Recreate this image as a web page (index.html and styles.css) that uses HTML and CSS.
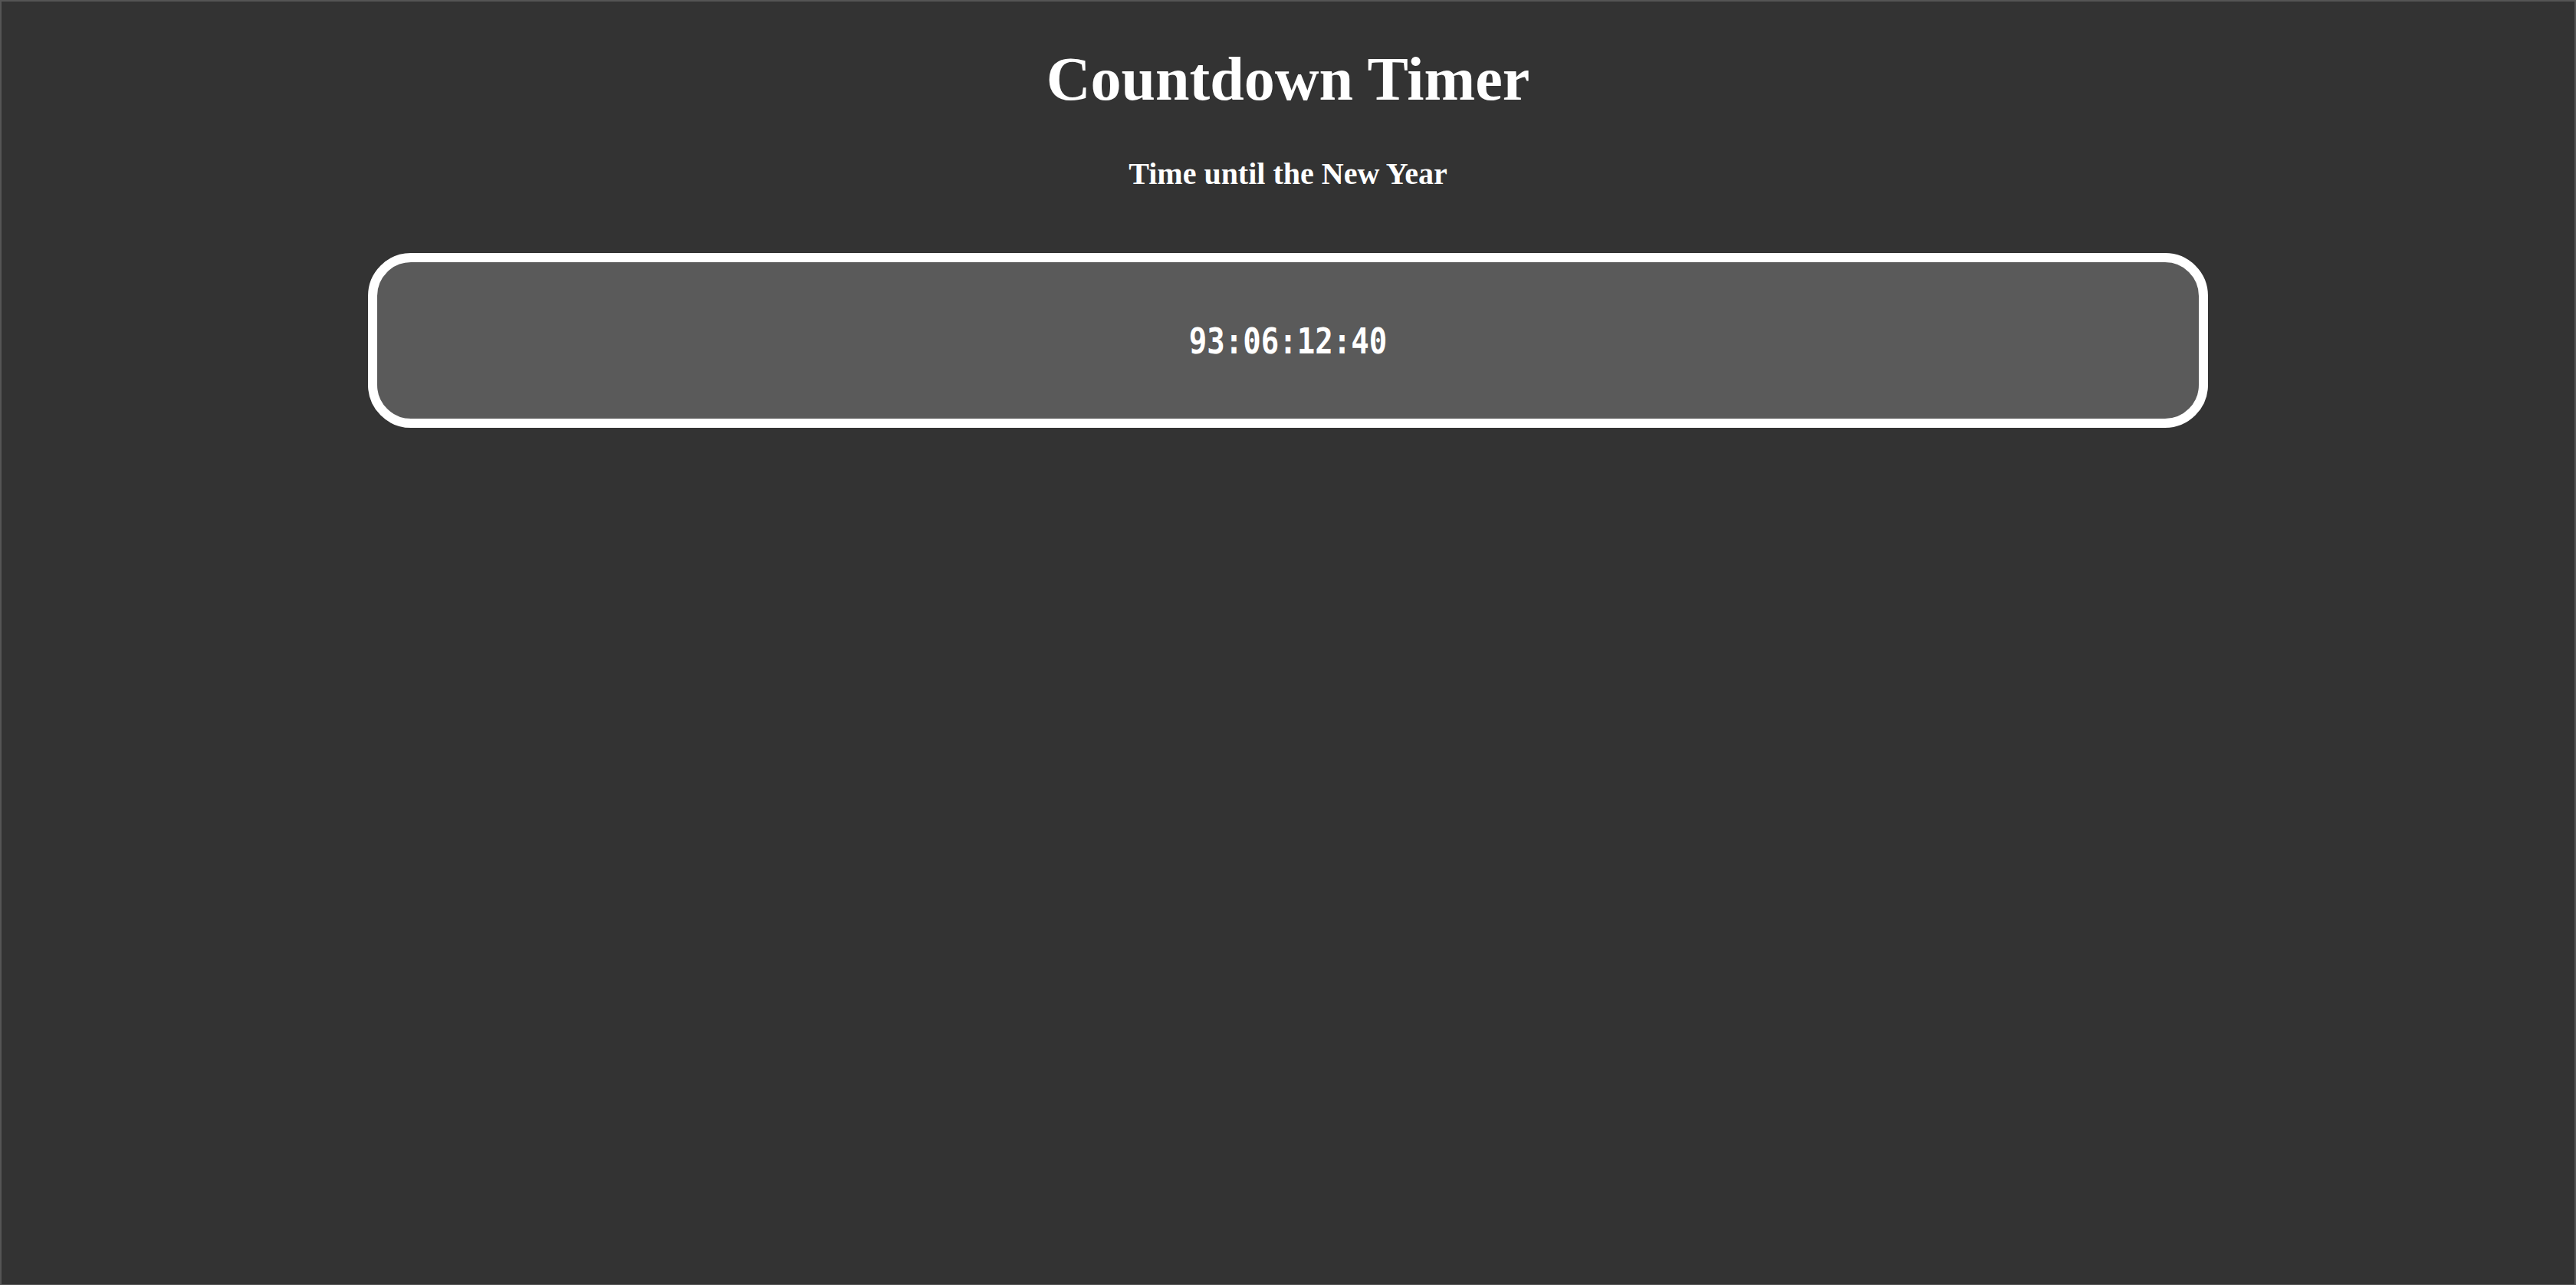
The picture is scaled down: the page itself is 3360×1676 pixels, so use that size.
FILE: index.html
```html
<!DOCTYPE html>
<html lang="en">
<head>
<meta charset="utf-8">
<title>Countdown Timer</title>
<link rel="stylesheet" href="styles.css">
</head>
<body>
<main class="page">
  <h1 class="title">Countdown Timer</h1>
  <h2 class="subtitle">Time until the New Year</h2>
  <div class="timer-box">
    <span class="timer">93:06:12:40</span>
  </div>
</main>
</body>
</html>
```
FILE: styles.css
```css
html, body {
  margin: 0;
  padding: 0;
  background: #333333;
}

.page {
  box-sizing: border-box;
  min-height: 100vh;
  border: 2px solid #555555;
  border-bottom-width: 1px;
  padding-top: 58px;
  display: flex;
  flex-direction: column;
  align-items: center;
  color: #ffffff;
  font-family: "Liberation Serif", "Times New Roman", serif;
}

.title {
  margin: 0;
  font-size: 80px;
  font-weight: bold;
  line-height: 86px;
  text-align: center;
}

.subtitle {
  margin: 59px 0 0;
  font-size: 40px;
  font-weight: bold;
  line-height: 44px;
  text-align: center;
}

.timer-box {
  box-sizing: border-box;
  margin-top: 81px;
  width: 2400px;
  height: 228px;
  border: 12px solid #ffffff;
  border-radius: 56px;
  background: #5a5a5a;
  display: flex;
  align-items: center;
  justify-content: center;
}

.timer {
  display: inline-block;
  font-family: "DejaVu Sans Mono", "Liberation Mono", monospace;
  font-weight: bold;
  font-size: 39px;
  line-height: 1;
  transform: scaleY(1.2);
  color: #ffffff;
}
```
